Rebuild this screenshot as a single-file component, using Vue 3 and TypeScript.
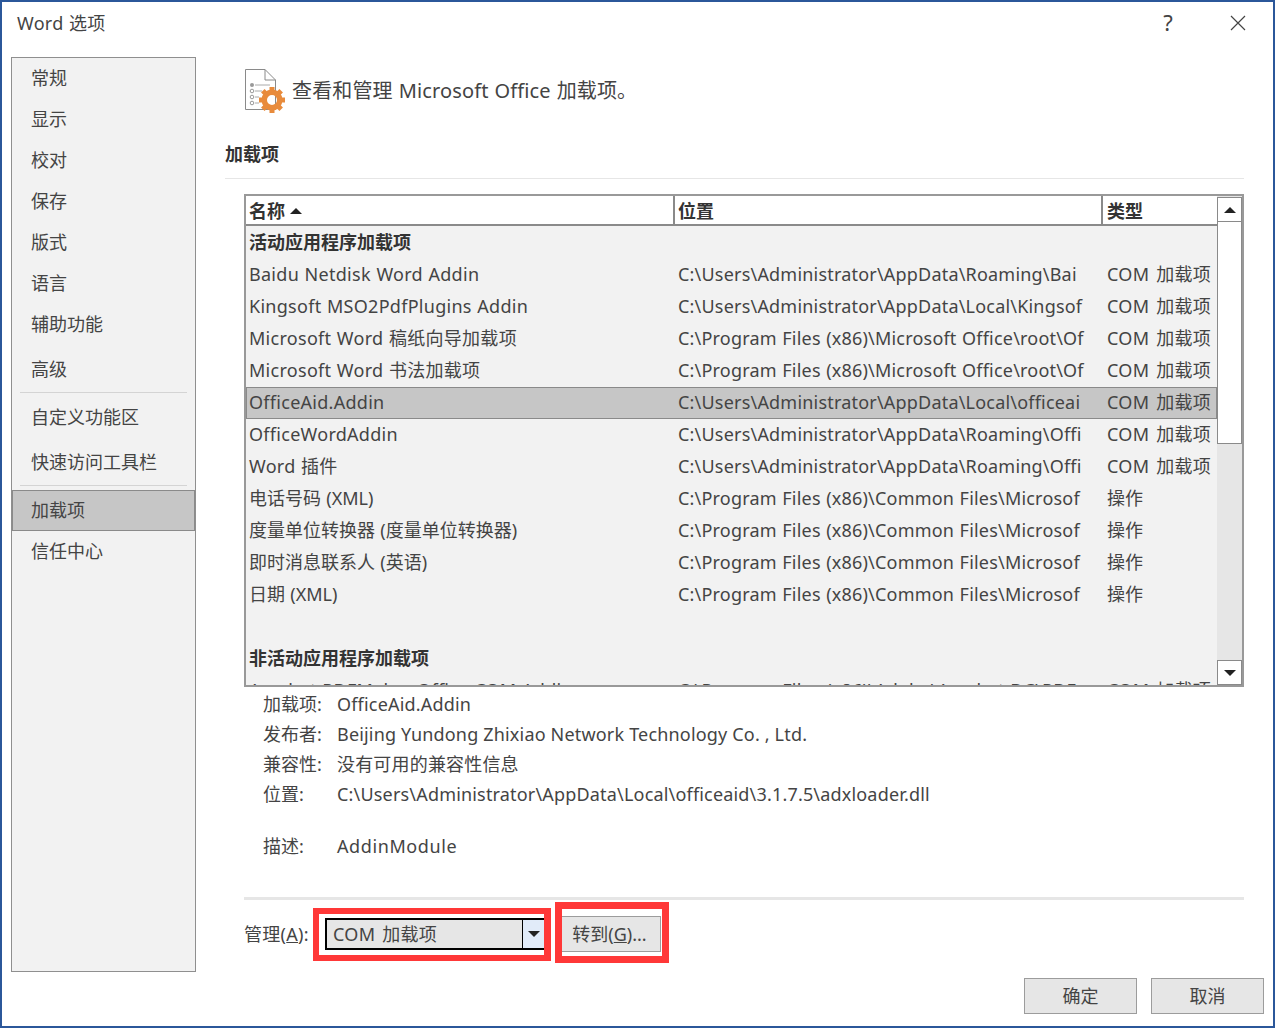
<script setup lang="ts">
interface Addin {
  name: string
  path: string
  type: string
  group?: boolean
  selected?: boolean
}

const navGroups = [
  [
    { label: '常规' },
    { label: '显示' },
    { label: '校对' },
    { label: '保存' },
    { label: '版式' },
    { label: '语言' },
    { label: '辅助功能' },
    { label: '高级', spaced: true },
  ],
  [{ label: '自定义功能区' }, { label: '快速访问工具栏', spaced: true }],
  [{ label: '加载项', active: true }, { label: '信任中心' }],
]

const rows: Addin[] = [
  { name: '活动应用程序加载项', path: '', type: '', group: true },
  { name: 'Baidu Netdisk Word Addin', path: 'C:\\Users\\Administrator\\AppData\\Roaming\\Bai', type: 'COM 加载项' },
  { name: 'Kingsoft MSO2PdfPlugins Addin', path: 'C:\\Users\\Administrator\\AppData\\Local\\Kingsof', type: 'COM 加载项' },
  { name: 'Microsoft Word 稿纸向导加载项', path: 'C:\\Program Files (x86)\\Microsoft Office\\root\\Of', type: 'COM 加载项' },
  { name: 'Microsoft Word 书法加载项', path: 'C:\\Program Files (x86)\\Microsoft Office\\root\\Of', type: 'COM 加载项' },
  { name: 'OfficeAid.Addin', path: 'C:\\Users\\Administrator\\AppData\\Local\\officeai', type: 'COM 加载项', selected: true },
  { name: 'OfficeWordAddin', path: 'C:\\Users\\Administrator\\AppData\\Roaming\\Offi', type: 'COM 加载项' },
  { name: 'Word 插件', path: 'C:\\Users\\Administrator\\AppData\\Roaming\\Offi', type: 'COM 加载项' },
  { name: '电话号码 (XML)', path: 'C:\\Program Files (x86)\\Common Files\\Microsof', type: '操作' },
  { name: '度量单位转换器 (度量单位转换器)', path: 'C:\\Program Files (x86)\\Common Files\\Microsof', type: '操作' },
  { name: '即时消息联系人 (英语)', path: 'C:\\Program Files (x86)\\Common Files\\Microsof', type: '操作' },
  { name: '日期 (XML)', path: 'C:\\Program Files (x86)\\Common Files\\Microsof', type: '操作' },
  { name: '', path: '', type: '' },
  { name: '非活动应用程序加载项', path: '', type: '', group: true },
  { name: 'Acrobat PDFMaker Office COM Addin', path: 'C:\\Program Files (x86)\\Adobe\\Acrobat DC\\PDF', type: 'COM 加载项' },
]

const details = [
  { label: '加载项:', value: 'OfficeAid.Addin' },
  { label: '发布者:', value: 'Beijing Yundong Zhixiao Network Technology Co. , Ltd.' },
  { label: '兼容性:', value: '没有可用的兼容性信息' },
  { label: '位置:', value: 'C:\\Users\\Administrator\\AppData\\Local\\officeaid\\3.1.7.5\\adxloader.dll' },
]

const gearTeeth = [0, 45, 90, 135, 180, 225, 270, 315]
</script>

<template>
  <div class="window">
    <header class="titlebar">
      <span class="title">Word 选项</span>
      <span class="help">?</span>
      <svg class="close" width="16" height="16" viewBox="0 0 16 16">
        <path d="M1 1 L15 15 M15 1 L1 15" stroke="#444" stroke-width="1.2" fill="none" />
      </svg>
    </header>

    <div class="content">
      <nav class="sidebar">
        <template v-for="(group, g) in navGroups" :key="g">
          <div v-if="g > 0" class="nav-sep"></div>
          <div
            v-for="item in group"
            :key="item.label"
            class="nav-item"
            :class="{ active: 'active' in item && item.active, spaced: 'spaced' in item && item.spaced }"
          >
            {{ item.label }}
          </div>
        </template>
      </nav>

      <main class="main">
        <div class="intro">
          <svg class="intro-icon" width="44" height="46" viewBox="0 0 44 46">
            <path d="M1.5 1.5 H21 L31.5 12 V41.5 H1.5 Z M21 1.5 V12 H31.5" fill="#fff" stroke="#8a8a8a" stroke-width="1" />
            <circle cx="8" cy="17" r="2" fill="#999" />
            <path d="M11 17 H26" stroke="#aaa" stroke-width="1" />
            <circle cx="8" cy="23" r="1.8" fill="none" stroke="#999" />
            <path d="M11 23 H18" stroke="#aaa" stroke-width="1" />
            <circle cx="8" cy="29" r="1.8" fill="none" stroke="#999" />
            <path d="M11 29 H15" stroke="#aaa" stroke-width="1" />
            <circle cx="8" cy="35" r="1.8" fill="none" stroke="#999" />
            <path d="M11 35 H15" stroke="#aaa" stroke-width="1" />
            <rect
              v-for="a in gearTeeth"
              :key="a"
              x="25.5"
              y="19"
              width="5"
              height="5"
              fill="#e88b3c"
              :transform="`rotate(${a} 28 32)`"
            />
            <circle cx="28" cy="32" r="7.75" fill="none" stroke="#e88b3c" stroke-width="5.5" />
          </svg>
          <span class="intro-text">查看和管理 Microsoft Office 加载项。</span>
        </div>

        <h2 class="section">加载项</h2>

        <div class="indent">
          <div class="list">
            <div class="list-body">
              <div class="list-head">
                <div class="head-cell">名称<span class="sort"></span></div>
                <div class="head-cell">位置</div>
                <div class="head-cell">类型</div>
              </div>
              <div
                v-for="(row, i) in rows"
                :key="i"
                class="row"
                :class="{ group: row.group, selected: row.selected, cjk: row.type === '操作' }"
              >
                <div class="cell">{{ row.name }}</div>
                <div class="cell path">{{ row.path }}</div>
                <div class="cell">{{ row.type }}</div>
              </div>
            </div>
            <div class="scrollbar">
              <div class="scroll-btn"><span class="tri up"></span></div>
              <div class="scroll-thumb"></div>
              <div class="scroll-track"></div>
              <div class="scroll-btn"><span class="tri down"></span></div>
            </div>
          </div>

          <div class="details">
            <div v-for="d in details" :key="d.label" class="detail">
              <span class="detail-label">{{ d.label }}</span>
              <span>{{ d.value }}</span>
            </div>
            <div class="detail desc">
              <span class="detail-label">描述:</span>
              <span class="module">AddinModule</span>
            </div>
          </div>

          <div class="manage">
            <span class="manage-label">管理(<u>A</u>):</span>
            <div class="select">
              <span class="select-value">COM 加载项</span>
              <span class="select-arrow"><span class="tri down"></span></span>
            </div>
            <button class="btn go">转到(<u>G</u>)...</button>
            <!-- 截图上的红色标注框 -->
            <div class="mark mark-select"></div>
            <div class="mark mark-go"></div>
          </div>
        </div>
      </main>
    </div>

    <footer class="footer">
      <button class="btn action">确定</button>
      <button class="btn action">取消</button>
    </footer>
  </div>
</template>

<style>
html,
body {
  margin: 0;
  background: #fff;
}
</style>

<style scoped>
.window {
  box-sizing: border-box;
  width: 1275px;
  height: 1028px;
  border: 2px solid #2b579a;
  background: #fff;
  color: #444;
  font-family: 'Noto Sans', 'Noto Sans CJK SC', sans-serif;
  font-size: 18px;
  letter-spacing: 0.28px;
  word-spacing: 0.6px;
  overflow: hidden;
  display: flex;
  flex-direction: column;
}
.titlebar {
  height: 55px;
  flex: none;
  display: flex;
  align-items: center;
  padding: 0 27px 14px 15px;
  box-sizing: border-box;
}
.title {
  flex: 1;
  line-height: 40px;
}
.help {
  margin-right: 57px;
  font-size: 22px;
  padding-bottom: 2px;
}
.content {
  flex: 1;
  display: flex;
  min-height: 0;
  padding-left: 9px;
}
.sidebar {
  box-sizing: border-box;
  width: 185px;
  height: 915px;
  flex: none;
  border: 1px solid #8f8f8f;
  background: #f2f2f2;
  letter-spacing: 0;
}
.nav-item {
  height: 41px;
  line-height: 40px;
  padding-left: 19px;
}
.nav-item.spaced {
  margin-top: 4px;
}
.nav-item.active {
  box-sizing: border-box;
  padding-left: 18px;
  line-height: 39px;
  border: 1px solid #8a8a8a;
  background: #c6c6c6;
}
.nav-sep {
  height: 1px;
  margin: 2px 8px 4px;
  background: #d4d4d4;
}
.main {
  width: 1019px;
  margin-left: 29px;
  flex: none;
}
.intro {
  display: flex;
  align-items: flex-start;
  height: 78px;
  padding: 11px 0 0 19px;
  box-sizing: border-box;
}
.intro-text {
  font-size: 20px;
  line-height: 46px;
  letter-spacing: 0.14px;
  margin-left: 4px;
}
.section {
  margin: 0;
  font-size: 18px;
  font-weight: 700;
  letter-spacing: 0;
  line-height: 38px;
  height: 43px;
  border-bottom: 1px solid #e6e6e6;
  color: #333;
}
.indent {
  margin: 15px 0 0 19px;
}
.list {
  box-sizing: border-box;
  width: 1000px;
  height: 493px;
  border: 2px solid #999;
  display: flex;
  overflow: hidden;
}
.list-body {
  width: 971px;
  flex: none;
  background: #f2f2f2;
  color: #444;
}
.list-head,
.row {
  display: grid;
  grid-template-columns: 429px 428px 114px;
}
.list-head {
  height: 30px;
  background: #fff;
  border-bottom: 2px solid #8a8a8a;
  box-sizing: border-box;
  color: #333;
  letter-spacing: 0;
}
.head-cell {
  box-sizing: border-box;
  padding-left: 3px;
  font-weight: 700;
  line-height: 30px;
  border-right: 2px solid #8a8a8a;
  display: flex;
  align-items: center;
}
.head-cell:last-child {
  border-right: 0;
  padding-left: 4px;
}
.sort {
  width: 0;
  height: 0;
  margin-left: 5px;
  border-left: 6px solid transparent;
  border-right: 6px solid transparent;
  border-bottom: 6px solid #222;
}
.row {
  height: 32px;
  line-height: 32px;
  box-sizing: border-box;
}
.row.group {
  font-weight: 700;
  color: #333;
  letter-spacing: 0;
}
.row.group .cell:first-child {
  overflow: visible;
}
.row.cjk .cell:first-child,
.row.cjk .cell:last-child {
  letter-spacing: 0;
}
.row.selected {
  margin: 1px 0 -1px;
  line-height: 30px;
  background: #c6c6c6;
  outline: 1px solid #8a8a8a;
  outline-offset: -1px;
}
.cell {
  padding-left: 3px;
  white-space: nowrap;
  overflow: hidden;
}
.cell.path {
  letter-spacing: 0.2px;
}
.cell:last-child {
  padding-left: 4px;
  word-spacing: 2px;
}
.scrollbar {
  width: 25px;
  flex: none;
  display: flex;
  flex-direction: column;
  background: #e6e6e6;
  padding-top: 1px;
}
.scroll-btn {
  box-sizing: border-box;
  height: 25px;
  flex: none;
  background: #fff;
  border: 1px solid #8a8a8a;
  display: flex;
  align-items: center;
  justify-content: center;
}
.scroll-thumb {
  box-sizing: border-box;
  height: 222px;
  flex: none;
  background: #fff;
  border: 1px solid #8a8a8a;
  border-top: 0;
}
.scroll-track {
  flex: 1;
}
.tri {
  display: block;
  width: 0;
  height: 0;
  border-left: 6px solid transparent;
  border-right: 6px solid transparent;
}
.tri.up {
  border-bottom: 6px solid #222;
}
.tri.down {
  border-top: 6px solid #222;
}
.details {
  padding: 2px 0 0 19px;
  height: 213px;
  box-sizing: border-box;
  border-bottom: 3px solid #e6e6e6;
  letter-spacing: 0.18px;
  word-spacing: 0;
}
.detail {
  display: flex;
  height: 30px;
  line-height: 30px;
}
.detail.desc {
  margin-top: 22px;
}
.detail-label {
  width: 74px;
  flex: none;
  letter-spacing: 0;
}
.module {
  letter-spacing: 0.6px;
}
.manage {
  position: relative;
  display: flex;
  align-items: center;
  height: 36px;
  margin-top: 16px;
}
.manage-label {
  width: 81px;
  flex: none;
  padding-bottom: 2px;
}
.select {
  box-sizing: border-box;
  width: 223px;
  height: 32px;
  border: 2px solid #000;
  background: #e6e6e6;
  display: flex;
  align-items: center;
}
.select-value {
  flex: 1;
  padding: 0 0 3px 6px;
  word-spacing: 2px;
}
.select-arrow {
  box-sizing: border-box;
  width: 24px;
  height: 100%;
  border-left: 1px solid #000;
  background: #e1ebf9;
  display: flex;
  align-items: center;
  padding-left: 5px;
}
.btn {
  box-sizing: border-box;
  font: inherit;
  letter-spacing: 0;
  color: #444;
  background: #e6e6e6;
  border: 1px solid #9c9c9c;
  padding: 0;
}
.go {
  width: 103px;
  height: 36px;
  margin-left: 10px;
  padding-bottom: 2px;
}
.mark {
  position: absolute;
  box-sizing: border-box;
  border: 6px solid #ff3838;
  pointer-events: none;
}
.mark-select {
  left: 69px;
  top: -8px;
  width: 238px;
  height: 53px;
  border-right-width: 7px;
}
.mark-go {
  left: 311px;
  top: -14px;
  width: 114px;
  height: 61px;
  border-width: 7px;
}
.footer {
  flex: none;
  height: 48px;
  padding-right: 9px;
  display: flex;
  justify-content: flex-end;
  align-items: flex-start;
  gap: 14px;
}
.action {
  width: 113px;
  height: 36px;
  padding-bottom: 3px;
}
</style>
